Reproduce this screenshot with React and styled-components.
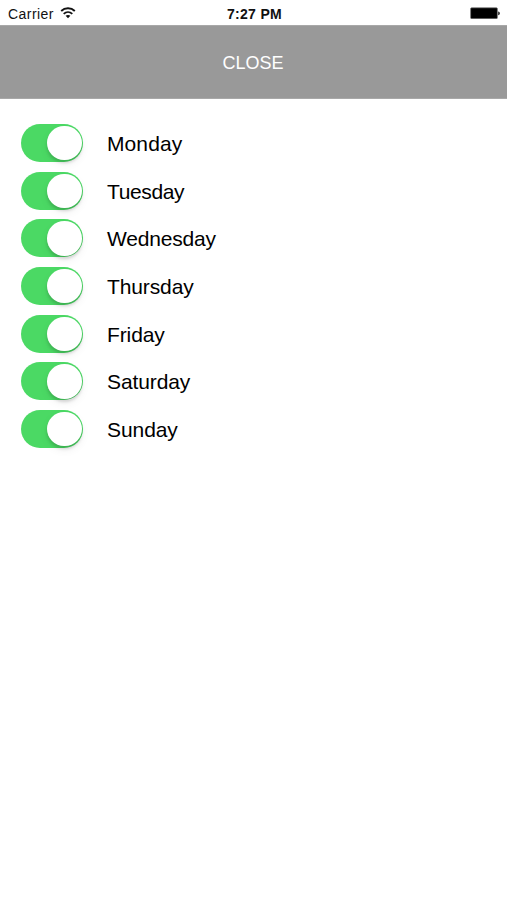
import { useState } from "react"
import styled, { createGlobalStyle } from "styled-components"

const DAYS = [
    { name: "Monday", tracking: 0.1 },
    { name: "Tuesday", tracking: -0.37 },
    { name: "Wednesday", tracking: -0.18 },
    { name: "Thursday", tracking: -0.12 },
    { name: "Friday", tracking: -0.1 },
    { name: "Saturday", tracking: -0.1 },
    { name: "Sunday", tracking: -0.08 },
]

function WifiIcon() {
    return (
        <svg width="16" height="12" viewBox="0 0 16 12" fill="none">
            <path d="M1.2 4C5 0.4 11 0.4 14.8 4" stroke="#111" strokeWidth="1.9" />
            <path d="M3.7 6.8C6.2 4.5 9.8 4.5 12.3 6.8" stroke="#111" strokeWidth="1.8" />
            <path d="M8 11.2L5.6 8.8C7 7.6 9 7.6 10.4 8.8Z" fill="#111" />
        </svg>
    )
}

function BatteryIcon() {
    return (
        <svg width="31" height="12" viewBox="0 0 31 12">
            <rect x="0.6" y="0.8" width="26.8" height="10.9" rx="1" fill="#000" stroke="#777" strokeWidth="0.7" />
            <path d="M28.2 4.5C30.4 4.8 30.4 8 28.2 8.3Z" fill="#222" />
        </svg>
    )
}

export default function App() {
    const [active, setActive] = useState(DAYS.map((day) => day.name));

    const toggle = (name) => {
        setActive(active.includes(name) ? active.filter((d) => d !== name) : [...active, name])
    }

    return (
        <Screen>
            <GlobalStyle />
            <StatusBar>
                <Carrier>
                    <span>Carrier</span>
                    <WifiIcon />
                </Carrier>
                <Time>7:27 PM</Time>
                <Battery>
                    <BatteryIcon />
                </Battery>
            </StatusBar>
            <CloseButton>CLOSE</CloseButton>
            <DayList>
                {DAYS.map(({ name, tracking }) => (
                    <DayRow key={name}>
                        <Switch
                            role="switch"
                            aria-label={name}
                            aria-checked={active.includes(name)}
                            $on={active.includes(name)}
                            onClick={() => toggle(name)}
                        >
                            <Knob />
                        </Switch>
                        <DayName $tracking={tracking}>{name}</DayName>
                    </DayRow>
                ))}
            </DayList>
        </Screen>
    )
}

const GlobalStyle = createGlobalStyle`
body {
    margin: 0;
    background-color: #fff;
}
`

const Screen = styled.div`
min-height: 100vh;
background-color: #fff;
color: #111;
font-family: "Liberation Sans", Arial, sans-serif;
`

const StatusBar = styled.header`
display: grid;
grid-template-columns: 1fr auto 1fr;
align-items: start;
height: 25px;
padding: 7px 6px 0 8px;
box-sizing: border-box;
font-size: 14px;
line-height: 14px;
`

const Carrier = styled.div`
display: flex;
align-items: flex-start;
gap: 6px;
letter-spacing: 0.45px;
`

const Time = styled.div`
font-weight: 700;
letter-spacing: 0.3px;
`

const Battery = styled.div`
display: flex;
justify-content: flex-end;
`

const CloseButton = styled.button`
display: block;
width: 100%;
height: 74px;
padding: 2px 1px 0 0;
border: 0;
border-top: 1px solid #a8a8a8;
border-bottom: 1px solid #a8a8a8;
background-color: #999;
color: #fff;
font-family: inherit;
font-size: 18px;
cursor: pointer;
`

const DayList = styled.ul`
display: flex;
flex-direction: column;
gap: 9.65px;
margin: 0;
padding: 25.2px 20.5px;
list-style: none;
`

const DayRow = styled.li`
display: flex;
align-items: center;
gap: 24px;
height: 38px;
`

const Switch = styled.button`
display: flex;
align-items: center;
justify-content: ${({ $on }) => ($on ? "flex-end" : "flex-start")};
width: 62.5px;
height: 38px;
padding: 0 1.5px;
border: 0;
border-radius: 19px;
box-sizing: border-box;
background-color: ${({ $on }) => ($on ? "#4bd964" : "#e5e5e5")};
cursor: pointer;
`

const Knob = styled.span`
width: 34.5px;
height: 34.5px;
border-radius: 50%;
background-color: #fff;
box-shadow: 0 3px 3px rgba(0,0,0,0.14), 0 4px 10px rgba(0,0,0,0.06);
`

const DayName = styled.span`
color: #000;
font-size: 21px;
line-height: 38px;
padding-top: 1.6px;
letter-spacing: ${({ $tracking }) => $tracking}px;
`
